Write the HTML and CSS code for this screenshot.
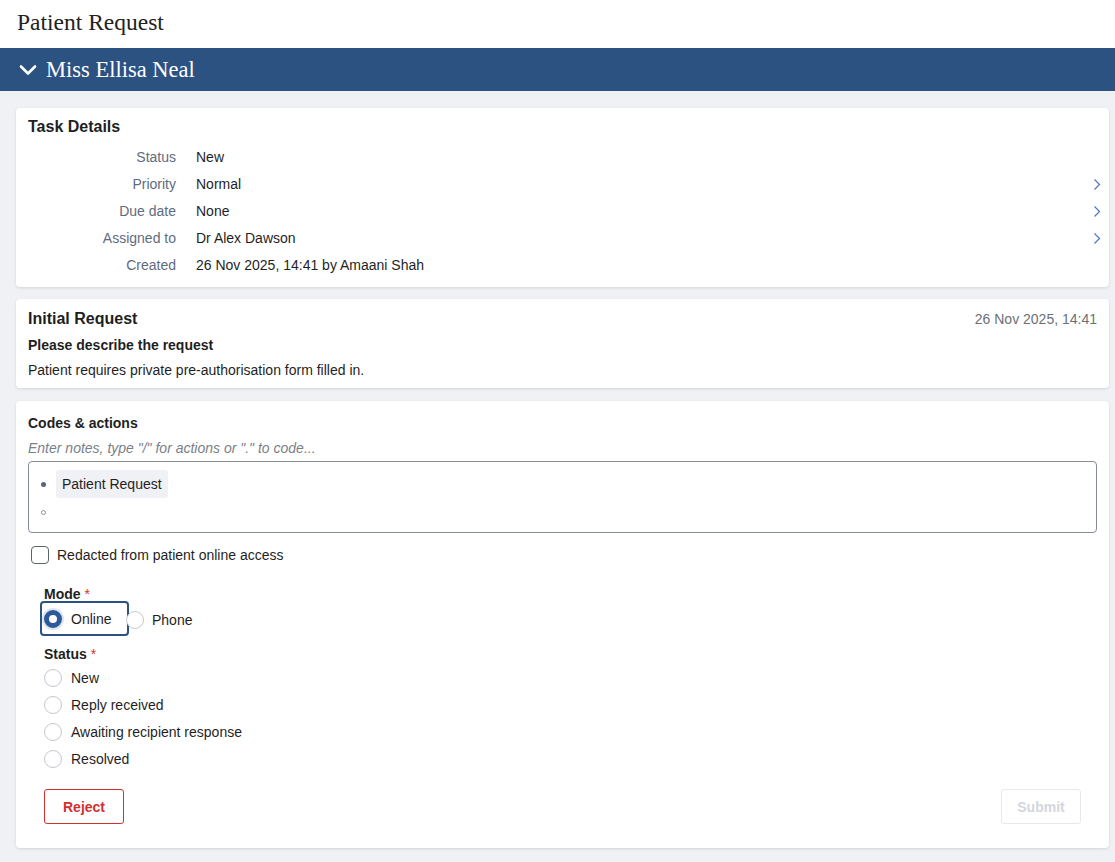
FILE: index.html
```html
<!DOCTYPE html>
<html>
<head>
<meta charset="utf-8">
<link rel="stylesheet" href="styles.css">
</head>
<body>
<header class="top">Patient Request</header>
<div class="banner">
  <svg class="banner-chev" width="18" height="12" viewBox="0 0 18 12"><path d="M2 2.5 L9 9.5 L16 2.5" fill="none" stroke="#fff" stroke-width="2.6" stroke-linecap="round" stroke-linejoin="round"/></svg>
  <span class="banner-name">Miss Ellisa Neal</span>
</div>
<main class="content">
  <section class="card task">
    <h2 class="card-title">Task Details</h2>
    <div class="details">
      <div class="row"><span class="lbl">Status</span><span class="val">New</span><span class="chev"></span></div>
      <div class="row"><span class="lbl">Priority</span><span class="val">Normal</span><span class="chev"><svg width="8" height="13" viewBox="0 0 8 13"><path d="M1.5 1.5 L6.5 6.5 L1.5 11.5" fill="none" stroke="#4a78bf" stroke-width="1.2"/></svg></span></div>
      <div class="row"><span class="lbl">Due date</span><span class="val">None</span><span class="chev"><svg width="8" height="13" viewBox="0 0 8 13"><path d="M1.5 1.5 L6.5 6.5 L1.5 11.5" fill="none" stroke="#4a78bf" stroke-width="1.2"/></svg></span></div>
      <div class="row"><span class="lbl">Assigned to</span><span class="val">Dr Alex Dawson</span><span class="chev"><svg width="8" height="13" viewBox="0 0 8 13"><path d="M1.5 1.5 L6.5 6.5 L1.5 11.5" fill="none" stroke="#4a78bf" stroke-width="1.2"/></svg></span></div>
      <div class="row"><span class="lbl">Created</span><span class="val">26 Nov 2025, 14:41 by Amaani Shah</span><span class="chev"></span></div>
    </div>
  </section>

  <section class="card request">
    <div class="req-head">
      <h2 class="card-title">Initial Request</h2>
      <span class="req-date">26 Nov 2025, 14:41</span>
    </div>
    <div class="q">Please describe the request</div>
    <div class="a">Patient requires private pre-authorisation form filled in.</div>
  </section>

  <section class="card codes">
    <div class="sub-title">Codes &amp; actions</div>
    <div class="placeholder">Enter notes, type "/" for actions or "." to code...</div>
    <div class="editor">
      <div class="eline"><span class="dot filled"></span><span class="chip">Patient Request</span></div>
      <div class="eline small"><span class="dot hollow"></span></div>
    </div>
    <label class="check"><span class="box"></span><span>Redacted from patient online access</span></label>

    <div class="form">
      <div class="field-label">Mode <span class="req">*</span></div>
      <div class="radios-inline">
        <div class="radio focus"><span class="circle on"></span><span>Online</span></div>
        <div class="radio phone"><span class="circle"></span><span>Phone</span></div>
      </div>
      <div class="field-label status-label">Status <span class="req">*</span></div>
      <div class="radios">
        <div class="radio"><span class="circle"></span><span>New</span></div>
        <div class="radio"><span class="circle"></span><span>Reply received</span></div>
        <div class="radio"><span class="circle"></span><span>Awaiting recipient response</span></div>
        <div class="radio"><span class="circle"></span><span>Resolved</span></div>
      </div>
      <div class="actions">
        <button class="btn reject">Reject</button>
        <button class="btn submit">Submit</button>
      </div>
    </div>
  </section>
</main>
</body>
</html>
```

FILE: styles.css
```css
* { box-sizing: border-box; }
html, body { margin: 0; padding: 0; }
body {
  background: #f0f1f5;
  font-family: "Liberation Sans", Arial, sans-serif;
  color: #1f1f1f;
  font-size: 14px;
  min-height: 862px;
}
.top {
  background: #fff;
  height: 48px;
  padding: 8px 0 0 17px;
  font-family: "Liberation Serif", Georgia, serif;
  font-size: 23.5px;
  line-height: 28px;
  color: #222;
}
.banner {
  background: #2c5282;
  height: 43px;
  display: flex;
  align-items: center;
  padding-left: 19px;
  color: #fff;
}
.banner-chev { margin-right: 9px; margin-top: 1px; }
.banner-name {
  font-family: "Liberation Serif", Georgia, serif;
  font-size: 22.5px;
}
.content {
  padding: 17px 6px 14px 16px;
  display: flex;
  flex-direction: column;
  gap: 12px;
}
.card {
  background: #fff;
  border-radius: 4px;
  box-shadow: 0 1px 3px rgba(0,0,0,0.12);
  padding: 0 12px;
}
.card-title {
  margin: 0;
  font-size: 16px;
  font-weight: bold;
  line-height: 20px;
  color: #1f1f1f;
}
.task { padding-top: 9px; padding-bottom: 8px; height: 179px; }
.details { margin-top: 6px; }
.row {
  display: grid;
  grid-template-columns: 148px 1fr 12px;
  column-gap: 20px;
  height: 27px;
  align-items: center;
}
.lbl { text-align: right; color: #5f6b7f; }
.val { color: #1f1f1f; }
.chev { display: flex; justify-content: flex-end; align-items: center; margin-right: -4px; padding-top: 2px; }

.request { padding-top: 10px; padding-bottom: 8px; height: 89px; }
.req-head { display: flex; justify-content: space-between; align-items: center; }
.req-date { color: #6b6f78; font-size: 14px; margin-right: 0; }
.q { font-weight: bold; line-height: 20px; margin-top: 6px; }
.a { line-height: 20px; margin-top: 5px; }

.codes { padding-top: 12px; padding-bottom: 24px; height: 447px; margin-top: 1px; }
.sub-title { font-weight: bold; line-height: 20px; }
.placeholder { font-style: italic; color: #7a7f89; line-height: 20px; margin-top: 5px; }
.editor {
  margin-top: 3px;
  height: 72px;
  border: 1px solid #868b99;
  border-radius: 4px;
  padding: 8px 0 0 12px;
}
.eline { display: flex; align-items: center; height: 28px; }
.eline.small { height: 29px; }
.dot { width: 5px; height: 5px; border-radius: 50%; margin-right: 10px; flex: none; }
.dot.filled { background: #5c6478; }
.dot.hollow { border: 1px solid #8a90a0; width: 5px; height: 5px; }
.chip {
  background: #f0f1f5;
  border-radius: 3px;
  height: 28px;
  line-height: 28px;
  padding: 0 6px;
}
.check {
  display: flex;
  align-items: center;
  margin-top: 12px;
  margin-left: 3px;
  height: 20px;
}
.box {
  width: 18px; height: 18px;
  border: 1px solid #5c6270;
  border-radius: 4px;
  margin-right: 8px;
}
.form { padding: 0 16px; }
.field-label { font-weight: bold; line-height: 20px; margin-top: 19px; }
.req { color: #d32f2f; font-weight: normal; }
.radios-inline { display: flex; align-items: center; }
.radio { display: flex; align-items: center; height: 27px; }
.radio .circle {
  width: 18px; height: 18px;
  border-radius: 50%;
  border: 1px solid #c3c7cf;
  margin-right: 9px;
  flex: none;
  background: #fff;
}
.radio .circle.on {
  border: 5px solid #2c5a9a;
  box-shadow: 0 0 0 2px #dde4ee;
}
.focus {
  height: 35px;
  margin-left: -4px;
  padding-left: 4px;
  width: 89px;
  border: 2px solid #2c5282;
  border-radius: 4px;
  margin-top: -3px;
}
.focus .circle { margin-left: -2px; }
.phone { margin-left: -3px; }
.phone .circle { margin-right: 8px; }
.status-label { margin-top: 8px; }
.radios { margin-top: 0; }
.actions {
  display: flex;
  justify-content: space-between;
  margin-top: 17px;
}
.btn {
  font-family: "Liberation Sans", Arial, sans-serif;
  font-size: 14px;
  font-weight: bold;
  width: 80px;
  height: 35px;
  background: #fff;
  border-radius: 3px;
}
.reject { border: 1px solid #d32f2f; color: #d32f2f; }
.submit { border: 1px solid #e6e8ec; color: #d3d6dc; }
```
